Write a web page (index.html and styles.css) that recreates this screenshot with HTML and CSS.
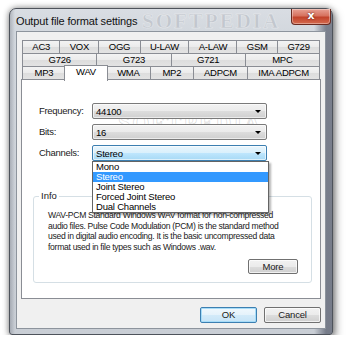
FILE: index.html
```html
<!DOCTYPE html>
<html>
<head>
<meta charset="utf-8">
<link rel="stylesheet" href="styles.css">
</head>
<body>
<div class="window">
  <div class="titlebar">Output file format settings</div>
  <div class="wm-title">SOFTPEDIA</div>
  <div class="close"><span>x</span></div>
  <div class="client">
    <div class="tabs">
      <div class="row r1">
        <div class="tab">AC3</div><div class="tab">VOX</div><div class="tab">OGG</div><div class="tab">U-LAW</div><div class="tab">A-LAW</div><div class="tab">GSM</div><div class="tab">G729</div>
      </div>
      <div class="row r2">
        <div class="tab">G726</div><div class="tab">G723</div><div class="tab">G721</div><div class="tab">MPC</div>
      </div>
      <div class="row r3">
        <div class="tab">MP3</div><div class="tab sel">WAV</div><div class="tab">WMA</div><div class="tab">MP2</div><div class="tab">ADPCM</div><div class="tab">IMA ADPCM</div>
      </div>
    </div>
    <div class="panel">
      <div class="wm-center">SOFTPEDIA</div>
      <div class="wm-small">www.softpedia.com</div>
      <div class="form">
        <div class="lbl">Frequency:</div>
        <div class="combo"><span>44100</span><i class="arr"></i></div>
        <div class="lbl">Bits:</div>
        <div class="combo"><span>16</span><i class="arr"></i></div>
        <div class="lbl">Channels:</div>
        <div class="combo hot"><span>Stereo</span><i class="arr"></i>
          <div class="list">
            <div class="item">Mono</div>
            <div class="item on">Stereo</div>
            <div class="item">Joint Stereo</div>
            <div class="item">Forced Joint Stereo</div>
            <div class="item">Dual Channels</div>
          </div>
        </div>
      </div>
      <div class="group">
        <span class="legend">Info</span>
        <p class="desc">WAV-PCM Standard Windows WAV format for non-compressed<br>audio files. Pulse Code Modulation (PCM) is the standard method<br>used in digital audio encoding. It is the basic uncompressed data<br>format used in file types such as Windows .wav.</p>
        <div class="btn more">More</div>
      </div>
    </div>
    <div class="buttons">
      <div class="btn def">OK</div>
      <div class="btn">Cancel</div>
    </div>
  </div>
</div>
</body>
</html>
```

FILE: styles.css
```css
html, body {
  margin: 0;
  background: #ffffff;
}
body {
  padding: 8px 0 0 9px;
  font-family: "Liberation Sans", Arial, sans-serif;
  color: #000;
}
.window {
  position: relative;
  width: 324px;
  height: 327px;
  box-sizing: border-box;
  border: 1px solid #4e535b;
  border-radius: 7px 7px 3px 3px;
  padding: 0 6px 5px 6px;
  display: flex;
  flex-direction: column;
  background:
    linear-gradient(to right, rgba(60,66,80,0.25) 0, rgba(255,255,255,0) 5px, rgba(255,255,255,0) 304px, rgba(50,56,75,0.55) 316px),
    linear-gradient(to bottom, #d9dde3 0, #d3d8de 22px, #c9ced5 100%);
  box-shadow: 0 0 6px rgba(0,0,0,0.45), 3px 4px 8px rgba(0,0,0,0.35);
}
.titlebar {
  height: 22px;
  flex: none;
  display: flex;
  align-items: center;
  padding-top: 1px;
  box-sizing: border-box;
  font-size: 11px;
  letter-spacing: -0.15px;
  color: #111;
}
.wm-title {
  position: absolute;
  left: 132px;
  top: 0px;
  font: bold 21px "Liberation Serif", serif;
  letter-spacing: 2px;
  color: rgba(140,145,155,0.25);
  -webkit-text-stroke: 0.5px rgba(255,255,255,0.5);
}
.close {
  position: absolute;
  top: 0;
  right: 1px;
  width: 40px;
  height: 16px;
  box-sizing: border-box;
  border: 1px solid #6a2a20;
  border-top: none;
  border-radius: 0 0 4px 4px;
  background: linear-gradient(to bottom, #e8a194 0, #d6725f 45%, #c2432b 55%, #d46b4f 100%);
  box-shadow: inset 0 0 0 1px rgba(255,255,255,0.35);
  display: flex;
  align-items: center;
  justify-content: center;
}
.close span {
  color: #fff;
  font: bold 11px "DejaVu Sans", sans-serif;
  line-height: 1;
  margin-top: -2px;
  text-shadow: 0 0 2px #4a1008;
}
.client {
  flex: 1;
  background: #f0f0f0;
  border: 1px solid #8d949d;
  padding: 8px 4px 0 4px;
  display: flex;
  flex-direction: column;
}
.tabs {
  display: flex;
  flex-direction: column;
  padding: 0 1px 0 1px;
  position: relative;
  z-index: 2;
}
.row {
  display: flex;
  height: 13px;
}
.tab {
  flex: 1 1 auto;
  height: 14px;
  box-sizing: border-box;
  border: 1px solid #8a8d94;
  margin-left: -1px;
  padding: 0 4px;
  background: linear-gradient(to bottom, #f3f3f3 0, #ebebeb 50%, #dddddd 51%, #e3e3e3 100%);
  font-size: 9.5px;
  letter-spacing: -0.25px;
  line-height: 12px;
  text-align: center;
  white-space: nowrap;
}
.tab:first-child { margin-left: 0; }
.r2 .tab { flex: 1 1 0; }
.r3 .tab { min-width: 44px; padding: 0 5px; }
.tab.sel {
  background: #ffffff;
  height: 16px;
  margin-top: -1px;
  margin-left: -2px;
  margin-right: -1px;
  border-bottom: none;
  line-height: 11px;
  position: relative;
  z-index: 3;
}
.panel {
  position: relative;
  height: 220px;
  box-sizing: border-box;
  border: 1px solid #8a8d94;
  background: #ffffff;
  padding-top: 23px;
  flex: none;
}
.wm-center {
  position: absolute;
  left: 96px;
  top: 30px;
  font: bold 22px "Liberation Serif", serif;
  letter-spacing: 2px;
  color: rgba(255,255,255,0.6);
  -webkit-text-stroke: 0.6px rgba(180,180,180,0.55);
}
.wm-small {
  position: absolute;
  left: 112px;
  top: 67px;
  font-size: 6px;
  color: rgba(170,170,170,0.6);
}
.form {
  display: grid;
  grid-template-columns: 53px 175px;
  grid-auto-rows: 16px;
  row-gap: 5px;
  margin-left: 17px;
  position: relative;
  z-index: 2;
}
.lbl {
  font-size: 9.5px;
  letter-spacing: -0.3px;
  line-height: 16px;
  color: #1a1a1a;
}
.combo {
  position: relative;
  box-sizing: border-box;
  border: 1px solid #7a7a7a;
  border-radius: 2px;
  background: linear-gradient(to bottom, #f2f2f2 0, #ebebeb 50%, #dddddd 51%, #cfcfcf 100%);
  box-shadow: inset 0 0 0 1px rgba(255,255,255,0.6);
  display: flex;
  align-items: center;
  padding-left: 3px;
  font-size: 9.5px;
  letter-spacing: -0.2px;
}
.combo span { flex: 1; }
.combo.hot {
  border-color: #3c7fb1;
  background: linear-gradient(to bottom, #eaf6fd 0, #d9f0fc 50%, #bee6fd 51%, #a7d9f5 100%);
}
.arr {
  width: 0;
  height: 0;
  border-left: 3px solid transparent;
  border-right: 3px solid transparent;
  border-top: 3px solid #000;
  margin-right: 5px;
}
.list {
  position: absolute;
  top: 15px;
  left: -1px;
  width: 177px;
  box-sizing: border-box;
  border: 1px solid #646464;
  background: #fff;
  box-shadow: 2px 2px 2px rgba(0,0,0,0.3);
  padding: 0;
  z-index: 5;
}
.item {
  height: 10px;
  line-height: 10px;
  padding-left: 3px;
  font-size: 9.5px;
  letter-spacing: -0.2px;
}
.item.on {
  background: #3399ff;
  color: #fff;
}
.group {
  position: relative;
  margin: 35px 0 0 11px;
  width: 279px;
  height: 87px;
  box-sizing: border-box;
  border: 1px solid #d5dfe5;
  border-radius: 3px;
  display: flex;
  flex-direction: column;
  padding: 13px 10px 8px 14px;
}
.legend {
  position: absolute;
  left: 5px;
  top: -7px;
  background: #fff;
  padding: 0 2px;
  font-size: 9.5px;
  line-height: 12px;
  color: #1a1a1a;
}
.desc {
  margin: 0;
  font-size: 8.6px;
  line-height: 10.5px;
  letter-spacing: -0.3px;
  color: #1a1a1a;
  white-space: nowrap;
}
.btn {
  box-sizing: border-box;
  height: 16px;
  border: 1px solid #707070;
  border-radius: 2px;
  background: linear-gradient(to bottom, #f2f2f2 0, #ebebeb 50%, #dddddd 51%, #cfcfcf 100%);
  box-shadow: inset 0 0 0 1px rgba(255,255,255,0.7);
  font-size: 9.5px;
  letter-spacing: -0.2px;
  line-height: 14px;
  text-align: center;
  color: #1a1a1a;
}
.more {
  width: 50px;
  height: 15px;
  margin-top: auto;
  margin-right: 3px;
  align-self: flex-end;
}
.buttons {
  display: flex;
  justify-content: flex-end;
  gap: 7px;
  margin-top: 8px;
}
.buttons .btn { width: 57px; }
.btn.def {
  border-color: #3c7fb1;
  box-shadow: inset 0 0 0 1px #a6dcf8;
  background: linear-gradient(to bottom, #f0f8fd 0, #e5f2fb 50%, #d3eaf9 51%, #c6e4f7 100%);
}
```
